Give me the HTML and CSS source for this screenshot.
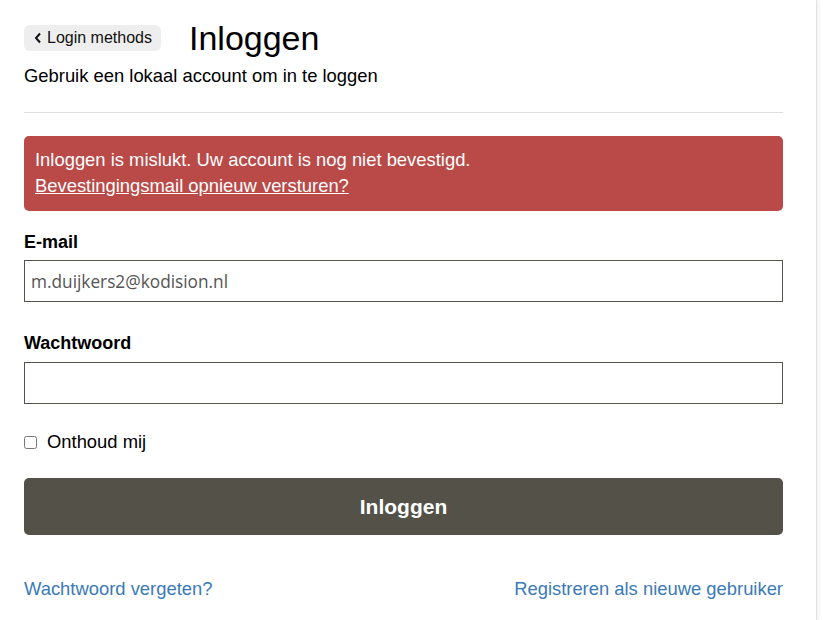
FILE: index.html
```html
<!DOCTYPE html>
<html lang="nl">
<head>
<meta charset="utf-8">
<title>Inloggen</title>
<link rel="stylesheet" href="styles.css">
</head>
<body>
<div class="page">
  <div class="content">
    <div class="header">
      <a class="back" href="#">
        <svg class="chev" width="8" height="12" viewBox="0 0 8 12"><path d="M6 1.5 L2 6 L6 10.5" fill="none" stroke="#111" stroke-width="2"/></svg>
        <span>Login methods</span>
      </a>
      <h1 class="title">Inloggen</h1>
    </div>
    <p class="subtitle">Gebruik een lokaal account om in te loggen</p>
    <hr class="rule">
    <div class="alert">
      <div>Inloggen is mislukt. Uw account is nog niet bevestigd.</div>
      <div><a class="alert-link" href="#">Bevestingingsmail opnieuw versturen?</a></div>
    </div>
    <label class="label" for="email">E-mail</label>
    <input class="field" id="email" type="text" value="m.duijkers2@kodision.nl">
    <label class="label label-second" for="pw">Wachtwoord</label>
    <input class="field field-second" id="pw" type="password">
    <label class="remember"><input class="check" type="checkbox"><span>Onthoud mij</span></label>
    <button class="submit" type="button">Inloggen</button>
    <div class="links">
      <a class="link" href="#">Wachtwoord vergeten?</a>
      <a class="link" href="#">Registreren als nieuwe gebruiker</a>
    </div>
  </div>
</div>
</body>
</html>
```
FILE: styles.css
```css
html, body {
  margin: 0;
  padding: 0;
  background: #fff;
}
body {
  font-family: "Liberation Sans", Arial, sans-serif;
  color: #000;
}
.page {
  width: 817px;
  height: 620px;
  border-right: 1px solid #e3e3e3;
  box-shadow: 2px 0 4px rgba(0, 0, 0, 0.06);
  box-sizing: border-box;
  overflow: hidden;
}
.content {
  width: 759px;
  padding: 18px 0 0 24px;
  display: flex;
  flex-direction: column;
}
.header {
  display: flex;
  align-items: center;
  height: 40px;
  gap: 28px;
}
.back {
  display: flex;
  align-items: center;
  gap: 5px;
  height: 26px;
  padding: 0 9px 0 10px;
  background: #eeeeee;
  border-radius: 6px;
  color: #111;
  text-decoration: none;
  font-size: 16px;
}
.chev { display: block; }
.title {
  margin: 0;
  font-size: 34px;
  font-weight: normal;
  line-height: 40px;
}
.subtitle {
  margin: 6px 0 0;
  font-size: 18.4px;
  line-height: 24px;
}
.rule {
  margin: 24px 0 0;
  border: 0;
  height: 1px;
  background: #dedede;
}
.alert {
  margin-top: 23px;
  background: #b94a48;
  color: #fff;
  border-radius: 5px;
  padding: 11px 11px 12px;
  font-size: 18.4px;
  line-height: 26px;
}
.alert-link {
  color: #fff;
  text-decoration: underline;
}
.label {
  display: block;
  margin-top: 20px;
  font-size: 18px;
  font-weight: bold;
  line-height: 22px;
}
.label-second { margin-top: 30px; }
.field {
  display: block;
  margin-top: 7px;
  width: 759px;
  height: 42px;
  box-sizing: border-box;
  border: 1px solid #55534b;
  border-radius: 0;
  padding: 0 6px;
  font-family: "Open Sans", "Noto Sans", sans-serif;
  font-size: 17.25px;
  color: #555;
  outline: none;
}
.field-second { margin-top: 8px; }
.remember {
  display: flex;
  align-items: center;
  gap: 10px;
  margin-top: 26px;
  font-size: 18.4px;
  line-height: 24px;
}
.check {
  margin: 0;
  width: 13px;
  height: 13px;
}
.submit {
  margin-top: 24px;
  height: 57px;
  width: 759px;
  border: 0;
  border-radius: 5px;
  background: #535148;
  color: #fff;
  font-family: "Liberation Sans", Arial, sans-serif;
  font-size: 21px;
  font-weight: bold;
}
.links {
  display: flex;
  justify-content: space-between;
  margin-top: 42px;
  font-size: 18.4px;
  line-height: 24px;
}
.link {
  color: #3a7ab8;
  text-decoration: none;
}
```
